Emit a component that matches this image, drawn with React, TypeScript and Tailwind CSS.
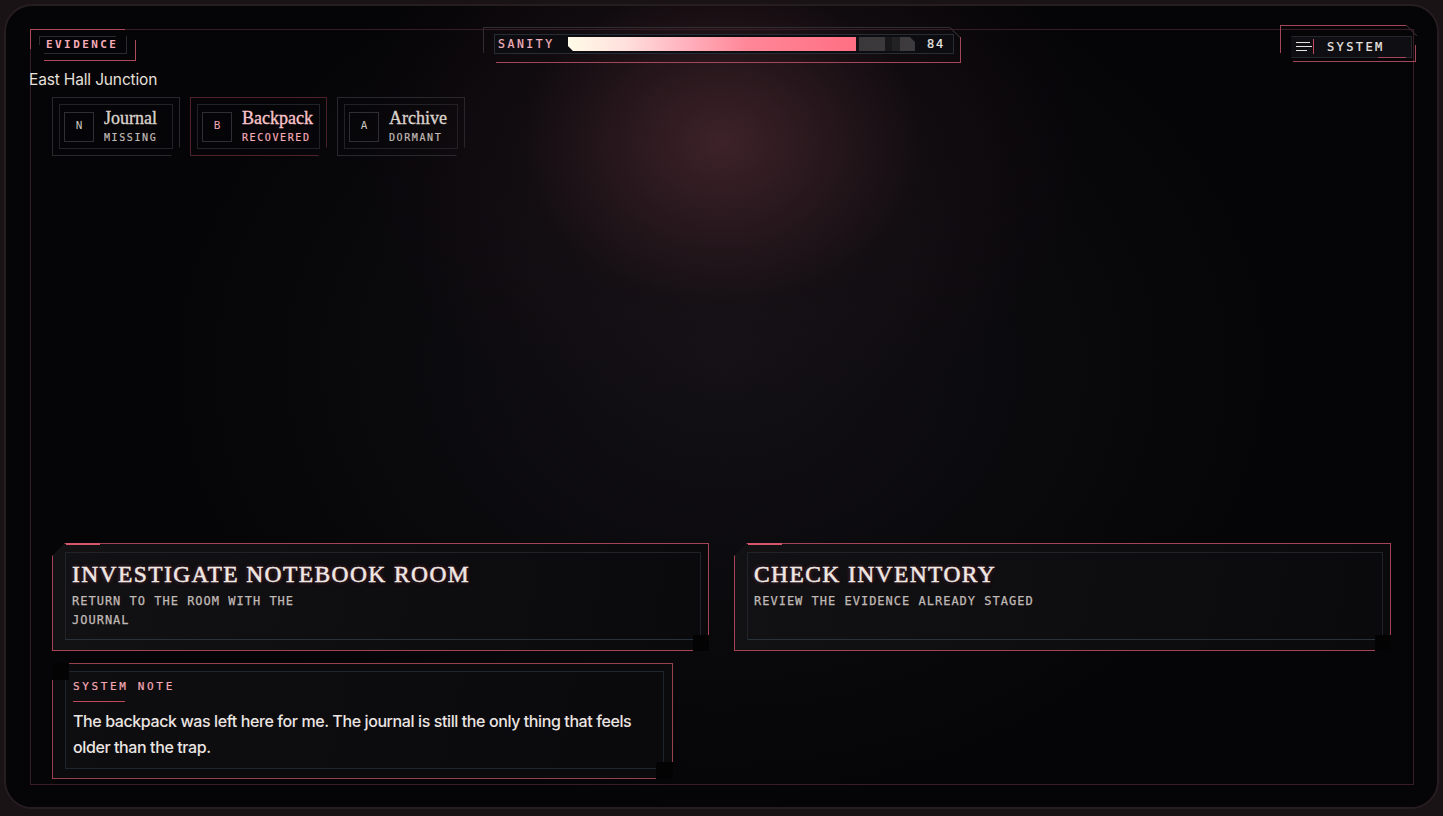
// Evidence HUD: top status bar, evidence tabs, action cards and a system note.
const MONO = "font-['DejaVu_Sans_Mono',monospace]";
const SERIF = "font-['Liberation_Serif',serif]";
const SANS = "font-['Inter',sans-serif]";

const SANITY = 84;

const tabs = [
  { key: "N", title: "Journal", status: "MISSING", active: false },
  { key: "B", title: "Backpack", status: "RECOVERED", active: true },
  { key: "A", title: "Archive", status: "DORMANT", active: false },
];

const actions = [
  { title: "INVESTIGATE NOTEBOOK ROOM", detail: "RETURN TO THE ROOM WITH THE JOURNAL" },
  { title: "CHECK INVENTORY", detail: "REVIEW THE EVIDENCE ALREADY STAGED" },
];

function EvidenceBadge() {
  return (
    <div className="relative -ml-px -mt-px flex h-[32px] w-[106px] items-center pl-[16px]">
      <span className="absolute left-0 top-0 h-px w-[95px] bg-[#b0485b]" />
      <span className="absolute left-0 top-0 h-[20px] w-px bg-[#b0485b]" />
      <span className="absolute left-[9px] top-[7px] h-px w-[77px] bg-[#2c2a2e]" />
      <span className="absolute left-[9px] top-[7px] h-[9px] w-px bg-[#2c2a2e]" />
      <span className="absolute left-[14px] top-[24px] h-px w-[83px] bg-[#2c2a2e]" />
      <span className="absolute left-[96px] top-[7px] h-[17px] w-px bg-[#2c2a2e]" />
      <span className="absolute bottom-0 left-[14px] h-px w-[92px] bg-[#b0485b]" />
      <span className="absolute right-0 top-[11px] h-[21px] w-px bg-[#b0485b]" />
      <span className={`${MONO} text-[11px] font-bold leading-[14px] tracking-[0.22em] text-[#f6aab7]`}>
        EVIDENCE
      </span>
    </div>
  );
}

function SanityBar() {
  return (
    <div className="relative -mt-[3px] h-[36px] w-[478px] pl-[11px] pr-[7px] pt-[7px]">
      <span className="absolute left-0 top-0 h-px w-[467px] bg-[#302e33]" />
      <span className="absolute left-0 top-0 h-[26px] w-px bg-[#302e33]" />
      <span className="absolute left-[465px] top-[5px] h-px w-[14px] rotate-45 bg-[#302e33]" />
      <span className="absolute bottom-0 left-[13px] right-0 h-px bg-[#a4465a]" />
      <span className="absolute bottom-0 right-0 top-[10px] w-px bg-[#a4465a]" />
      <div className="flex h-[20px] items-center border border-[#262d35] bg-[#0d0c10] pl-[3px] pr-[8px]">
        <span
          className={`${MONO} w-[70px] text-[11.5px] leading-[14px] tracking-[0.22em] text-[#f3b3bf] [-webkit-text-stroke:0.2px_#f3b3bf]`}
        >
          SANITY
        </span>
        <div className="relative flex h-[14px] flex-1 bg-[linear-gradient(90deg,#2a2729,#3e3b3e)] [clip-path:polygon(0_0,calc(100%-5px)_0,100%_5px,100%_100%,5px_100%,0_calc(100%-5px))]">
          <div
            className="h-full border-r-[3px] border-[#121013] bg-[linear-gradient(90deg,#fffbe8_0%,#ffe0dc_20%,#ffafbb_42%,#ff8798_62%,#ff6f83_100%)]"
            style={{ width: `${SANITY}%` }}
          />
          <span className="absolute bottom-0 left-[91.4%] top-0 w-[2.1%] bg-[#19181b]" />
          <span className="absolute bottom-0 left-[93.5%] top-0 w-[2.1%] bg-[#222124]" />
        </div>
        <span
          className={`${MONO} ml-[12px] text-[12px] leading-[14px] tracking-[0.15em] text-[#ece7e3] [-webkit-text-stroke:0.2px_#ece7e3]`}
        >
          {SANITY}
        </span>
      </div>
    </div>
  );
}

function SystemButton() {
  return (
    <button
      type="button"
      className="relative -mr-[6px] -mt-[5px] h-[37px] w-[139px] pl-[11px] pr-[7px] pt-[6px] text-left"
    >
      <span className="absolute left-0 top-0 h-px w-[126px] bg-[#a4465a]" />
      <span className="absolute left-0 top-0 h-[28px] w-px bg-[#a4465a]" />
      <span className="absolute left-[124px] top-[5px] h-px w-[15px] rotate-45 bg-[#3a2a30]" />
      <span className="absolute bottom-0 left-[13px] right-[3px] h-px bg-[#a4465a]" />
      <span className="absolute bottom-0 right-[3px] top-[20px] w-px bg-[#a4465a]" />
      <div className="relative flex h-[22px] items-center border border-[#25272c] border-l-transparent bg-[#0f0e12] pl-[4px]">
        <span className="absolute -bottom-px left-[86px] h-px w-[28px] bg-[#a4465a]" />
        <svg width="16" height="10" viewBox="0 0 16 10" className="block">
          <path d="M0 0.5H14M0 4.5H16M0 8.5H11" stroke="#e6e2de" strokeWidth="1" />
        </svg>
        <span className="ml-[1px] h-[15px] w-px bg-[#c0485b]" />
        <span
          className={`${MONO} ml-[13px] text-[12px] leading-[14px] tracking-[0.2em] text-[#ebe6e2] [-webkit-text-stroke:0.2px_#ebe6e2]`}
        >
          SYSTEM
        </span>
      </div>
    </button>
  );
}

function EvidenceTab({ k, title, status, active }: { k: string; title: string; status: string; active: boolean }) {
  return (
    <div
      className={`border p-[6px] [clip-path:polygon(0_0,100%_0,100%_calc(100%-9px),calc(100%-9px)_100%,0_100%)] ${
        active ? "border-[#4d222b]" : "border-[#29292d]"
      }`}
    >
      <div className="flex items-center gap-[10px] border border-[#222226] py-[4px] pl-[4px] pr-[6px]">
        <div
          className={`${MONO} flex h-[30px] w-[30px] items-center justify-center border border-[#2e2e33] text-[11px] ${
            active ? "text-[#f3a7b4]" : "text-[#c9c3bf]"
          }`}
        >
          {k}
        </div>
        <div className="flex min-w-[62px] flex-col">
          <span
            className={`${SERIF} text-[18px] leading-[18px] ${
              active
                ? "text-[#f8c4cb] [-webkit-text-stroke:0.35px_#f8c4cb]"
                : "text-[#d9d1cb] [-webkit-text-stroke:0.35px_#d9d1cb]"
            }`}
          >
            {title}
          </span>
          <span
            className={`${MONO} mt-[5px] text-[10px] leading-[12px] tracking-[0.16em] ${
              active ? "text-[#f4acb8] [-webkit-text-stroke:0.2px_#f4acb8]" : "text-[#c0bab6] [-webkit-text-stroke:0.2px_#c0bab6]"
            }`}
          >
            {status}
          </span>
        </div>
      </div>
    </div>
  );
}

function ActionCard({ title, detail }: { title: string; detail: string }) {
  return (
    <button
      type="button"
      className="relative flex h-[108px] border border-[#a44458] bg-[linear-gradient(100deg,#121114,#0a090c)] pb-[10px] pl-[12px] pr-[7px] pt-[8px] text-left [clip-path:polygon(13px_0,100%_0,100%_100%,0_100%,0_13px)]"
    >
      <span className="absolute left-[13px] top-[-1px] h-[2px] w-[34px] bg-[#d8566d]" />
      <span className="absolute bottom-[-1px] right-[-1px] h-[16px] w-[16px] bg-[#030304]" />
      <div className="flex-1 border border-[#202429] border-b-[#26323c] px-[6px] pt-[8px]">
        <h2
          className={`${SERIF} text-[23.5px] leading-[26px] tracking-[0.06em] text-[#f0e8e4] [-webkit-text-stroke:0.5px_#f0e8e4] [text-shadow:0_0_4px_rgba(214,80,104,0.5)]`}
        >
          {title}
        </h2>
        <p
          className={`${MONO} mt-[5px] max-w-[284px] text-[12px] leading-[19px] tracking-[1px] text-[#c0bab6] [-webkit-text-stroke:0.25px_#c0bab6]`}
        >
          {detail}
        </p>
      </div>
    </button>
  );
}

function SystemNote() {
  return (
    <div className="relative flex h-[116px] w-[621px] border border-[#97404f] bg-[#0b0a0d] pb-[9px] pl-[12px] pr-[8px] pt-[7px]">
      <span className="absolute -left-px -top-px h-[17px] w-[17px] bg-[#030304]" />
      <span className="absolute -bottom-px -right-px h-[17px] w-[17px] bg-[#030304]" />
      <div className="flex-1 border border-[#1f252c] bg-[linear-gradient(100deg,#0e0d10,#0a090c)] px-[7px] pt-[7px]">
        <div
          className={`${MONO} text-[11px] leading-[16px] tracking-[0.24em] text-[#f3a9b5] [-webkit-text-stroke:0.2px_#f3a9b5]`}
        >
          SYSTEM NOTE
        </div>
        <div className="mt-[6px] h-px w-[52px] bg-[#c0485c]" />
        <p className={`${SANS} mt-[6px] pr-[12px] text-[16px] font-medium leading-[26px] tracking-[-0.025em] text-[#ebe5e2]`}>
          The backpack was left here for me. The journal is still the only thing that feels older than the trap.
        </p>
      </div>
    </div>
  );
}

export default function App() {
  return (
    <div className="h-[816px] w-full bg-[#1a1315] px-[4px] pb-[7px] pt-[4px]">
      <div className="flex h-full flex-col rounded-[28px] border-2 border-[#261d21] bg-[#050406] bg-[radial-gradient(ellipse_360px_290px_at_50%_17%,rgba(78,42,50,0.75),rgba(34,20,26,0.35)_55%,transparent_100%),radial-gradient(ellipse_560px_440px_at_50%_45%,rgba(26,24,30,0.6),transparent_100%)] pb-[22px] pl-[24px] pr-[23px] pt-[23px]">
        <div className="flex flex-1 flex-col border border-[#381d24]">
          <div className="grid grid-cols-[1fr_auto_1fr] items-start">
            <div className="justify-self-start">
              <EvidenceBadge />
            </div>
            <SanityBar />
            <div className="justify-self-end">
              <SystemButton />
            </div>
          </div>

          <div className={`${SANS} -ml-[2px] mt-[7px] text-[15.5px] leading-[20px] tracking-[-0.01em] text-[#e6e0dc]`}>
            East Hall Junction
          </div>

          <div className="ml-[21px] mt-[7px] flex gap-[10px]">
            {tabs.map((t) => (
              <EvidenceTab key={t.key} k={t.key} title={t.title} status={t.status} active={t.active} />
            ))}
          </div>

          <div className="flex-1" />

          <div className="pb-[5px] pl-[21px] pr-[22px]">
            <div className="grid grid-cols-2 gap-[25px]">
              {actions.map((a) => (
                <ActionCard key={a.title} title={a.title} detail={a.detail} />
              ))}
            </div>
            <div className="mt-[12px]">
              <SystemNote />
            </div>
          </div>
        </div>
      </div>
    </div>
  );
}
